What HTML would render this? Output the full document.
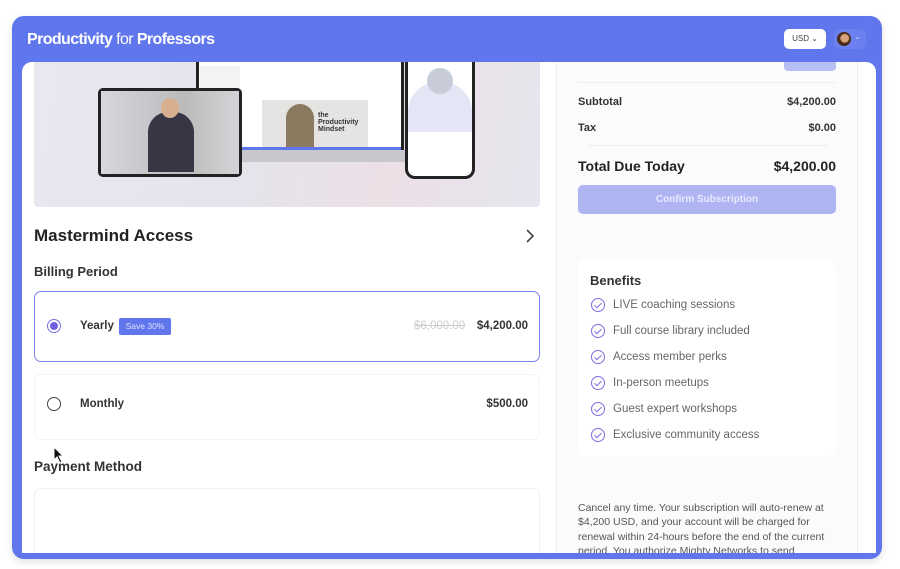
<!DOCTYPE html>
<html><head><meta charset="utf-8"><style>
*{box-sizing:border-box;margin:0;padding:0}
body{width:900px;height:569px;background:#fff;font-family:"Liberation Sans",sans-serif;position:relative;overflow:hidden;color:#222}
.frame{position:absolute;left:12px;top:16px;width:870px;height:543px;background:#5f76ec;border-radius:12px;box-shadow:0 3px 8px rgba(0,0,0,.12)}
.inner{position:absolute;left:22px;top:62px;width:854px;height:491px;background:#fff;border-radius:10px 10px 0 0;overflow:hidden}
.abs{position:absolute}
.title{left:27px;top:31px;color:#fff;font-size:16px;font-weight:bold;letter-spacing:-.6px}
.title span{font-weight:normal}
.usd{left:784px;top:29px;width:42px;height:20px;background:#fff;border-radius:5px;font-size:8px;color:#444;text-align:center;line-height:20px}
.av{left:834px;top:29px;width:32px;height:20px;background:#6b80ee;border-radius:6px}
.row{font-size:11px;color:#333;font-weight:bold}
.benefit{font-size:11.5px;color:#666;display:flex;align-items:center;gap:8px;height:26px}
.chk{width:14px;height:14px;border:1.5px solid #7a6fe0;border-radius:50%;position:relative}
.chk:after{content:"";position:absolute;left:3.5px;top:2px;width:3px;height:6px;border:solid #7a6fe0;border-width:0 1.5px 1.5px 0;transform:rotate(45deg)}
</style></head><body>
<div class="frame"></div>
<div class="abs title">Productivity <span>for</span> Professors</div>
<div class="abs usd">USD &#8964;</div>
<div class="abs av"><div style="position:absolute;left:3px;top:3px;width:14px;height:14px;border-radius:50%;background:radial-gradient(circle at 55% 45%,#d9a27a 0 35%,#4a2a18 45%)"></div><div style="position:absolute;left:20px;top:3px;color:#c8d0ff;font-size:8px">&#8964;</div></div>
<div class="inner">
 <div class="abs" style="left:12px;top:0;width:506px;height:145px;background:linear-gradient(100deg,#e8e8f0,#e4e4ec 40%,#ecdfe6 70%,#e6e6ee);border-radius:0 0 4px 4px"></div>
 <div class="abs" style="left:174px;top:0;width:208px;height:90px;background:#fff;border:3px solid #222;border-top:0"></div>
 <div class="abs" style="left:178px;top:4px;width:40px;height:84px;background:#f3f3f6"></div>
 <div class="abs" style="left:240px;top:38px;width:106px;height:50px;background:#e6e4e2"></div>
 <div class="abs" style="left:264px;top:42px;width:28px;height:46px;border-radius:14px 14px 0 0;background:#8c7a60"></div>
 <div class="abs" style="left:296px;top:50px;font-size:7px;font-weight:bold;color:#333;line-height:7px">the<br>Productivity<br>Mindset</div>
 <div class="abs" style="left:177px;top:85px;width:202px;height:3px;background:#5f76ec"></div>
 <div class="abs" style="left:174px;top:88px;width:214px;height:12px;background:#c8c8cc;border-radius:0 0 6px 6px"></div>
 <div class="abs" style="left:76px;top:26px;width:144px;height:89px;background:#9a9aa0;border:3px solid #222;border-radius:5px"></div>
 <div class="abs" style="left:79px;top:29px;width:138px;height:83px;background:linear-gradient(90deg,#d8d8dc,#c4c4c8 40%,#bbb 60%,#d4d4d8)"></div>
 <div class="abs" style="left:126px;top:50px;width:46px;height:60px;border-radius:20px 20px 0 0;background:#3a3545"></div>
 <div class="abs" style="left:139px;top:36px;width:18px;height:20px;border-radius:50%;background:#d8b090"></div>
 <div class="abs" style="left:383px;top:0;width:70px;height:117px;background:#fff;border:3px solid #222;border-top:0;border-radius:0 0 10px 10px"></div>
 <div class="abs" style="left:386px;top:20px;width:64px;height:50px;background:#e4e6f6;border-radius:30px 30px 0 0"></div>
 <div class="abs" style="left:405px;top:6px;width:26px;height:26px;border-radius:50%;background:#c8ccd8"></div>
 <div class="abs" style="left:534px;top:0;width:302px;height:491px;background:#fbfbfd;border-left:1px solid #eee;border-right:1px solid #eee"></div>
 <div class="abs" style="left:762px;top:0;width:52px;height:9px;background:#b6bff4;border-radius:0 0 4px 4px"></div>
 <div class="abs" style="left:556px;top:20px;width:258px;height:1px;background:#eee"></div>
 <div class="abs row" style="left:556px;top:34px">Subtotal</div><div class="abs row" style="right:40px;top:34px">$4,200.00</div>
 <div class="abs row" style="left:556px;top:60px">Tax</div><div class="abs row" style="right:40px;top:60px">$0.00</div>
 <div class="abs" style="left:566px;top:83px;width:240px;height:1px;background:#eee"></div>
 <div class="abs" style="left:556px;top:96px;font-size:14px;font-weight:bold;color:#222">Total Due Today</div>
 <div class="abs" style="right:40px;top:96px;font-size:14px;font-weight:bold;color:#222">$4,200.00</div>
 <div class="abs" style="left:556px;top:123px;width:258px;height:29px;background:#aeb5f2;border-radius:5px;color:#e8eaff;font-size:10px;font-weight:bold;text-align:center;line-height:29px">Confirm Subscription</div>
 <div class="abs" style="left:556px;top:197px;width:258px;height:198px;background:#fff;border-radius:10px"></div>
 <div class="abs" style="left:568px;top:211px;font-size:13px;font-weight:bold;color:#333">Benefits</div>
 <div class="abs" style="left:569px;top:230px">
  <div class="benefit"><div class="chk"></div>LIVE coaching sessions</div>
  <div class="benefit"><div class="chk"></div>Full course library included</div>
  <div class="benefit"><div class="chk"></div>Access member perks</div>
  <div class="benefit"><div class="chk"></div>In-person meetups</div>
  <div class="benefit"><div class="chk"></div>Guest expert workshops</div>
  <div class="benefit"><div class="chk"></div>Exclusive community access</div>
 </div>
 <div class="abs" style="left:556px;top:439px;width:258px;font-size:10.5px;line-height:14.3px;color:#555">Cancel any time. Your subscription will auto-renew at $4,200 USD, and your account will be charged for renewal within 24-hours before the end of the current period. You authorize Mighty Networks to send</div>
 <div class="abs" style="left:12px;top:164px;font-size:17px;font-weight:bold;color:#222">Mastermind Access</div>
 <svg class="abs" style="left:502px;top:166px" width="12" height="16" viewBox="0 0 12 16"><path d="M3 2 L9 8 L3 14" fill="none" stroke="#444" stroke-width="1.6"/></svg>
 <div class="abs" style="left:12px;top:202px;font-size:13px;font-weight:bold;color:#333">Billing Period</div>
 <div class="abs" style="left:12px;top:229px;width:506px;height:71px;border:1.5px solid #7a83ea;border-radius:7px"></div>
 <div class="abs" style="left:25px;top:257px;width:14px;height:14px;border:1.5px solid #7a6fe0;border-radius:50%"><div style="margin:2px;width:8px;height:8px;border-radius:50%;background:#6c62e0"></div></div>
 <div class="abs row" style="left:58px;top:258px;font-size:11.5px">Yearly</div>
 <div class="abs" style="left:97px;top:256px;width:52px;height:17px;background:#5f76ec;color:#dfe3ff;font-size:8.5px;text-align:center;line-height:17px;border-radius:2px">Save 30%</div>
 <div class="abs" style="left:392px;top:258px;font-size:11.5px;color:#ccc;text-decoration:line-through">$6,000.00</div>
 <div class="abs row" style="right:348px;top:258px;font-size:11.5px">$4,200.00</div>
 <div class="abs" style="left:12px;top:312px;width:506px;height:66px;border:1px solid #f4f4f6;border-radius:7px"></div>
 <div class="abs" style="left:25px;top:335px;width:14px;height:14px;border:1.5px solid #444;border-radius:50%"></div>
 <div class="abs row" style="left:58px;top:336px;font-size:11.5px">Monthly</div>
 <div class="abs row" style="right:348px;top:336px;font-size:11.5px">$500.00</div>
 <div class="abs" style="left:12px;top:397px;font-size:13.5px;font-weight:bold;color:#333">Payment Method</div>
 <div class="abs" style="left:12px;top:426px;width:506px;height:80px;border:1px solid #f0f0f3;border-radius:7px"></div>
</div>
<svg class="abs" style="left:53px;top:446px" width="12" height="18" viewBox="0 0 12 18"><path d="M1 1 L1 14 L4 11 L7 17 L9 16 L6 10 L10 10 Z" fill="#111" stroke="#fff" stroke-width="1"/></svg>
</body></html>
